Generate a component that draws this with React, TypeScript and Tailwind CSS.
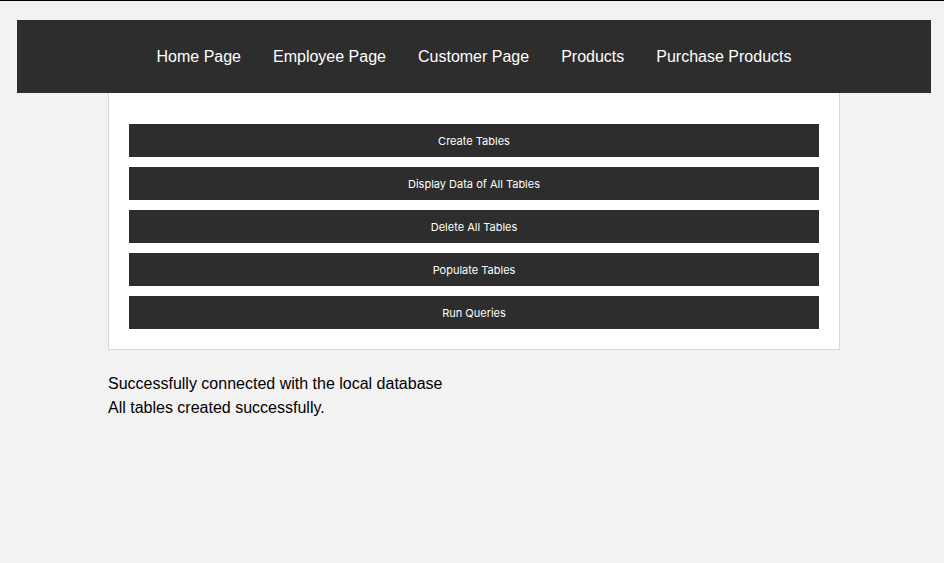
const links = ["Home Page", "Employee Page", "Customer Page", "Products", "Purchase Products"];

const actions = [
  "Create Tables",
  "Display Data of All Tables",
  "Delete All Tables",
  "Populate Tables",
  "Run Queries",
];

export default function App() {
  return (
    <div className="min-h-[563px] border-t border-black bg-[#f2f2f2] pl-[17px] pr-[13px] pt-[19px] font-['Liberation_Sans',Arial,sans-serif] text-black">
      {/* Top navigation */}
      <nav className="flex h-[73px] items-center justify-center bg-[#2d2d2d]">
        {links.map((l) => (
          <a key={l} href="#" className="px-4 text-[16px] text-white">
            {l}
          </a>
        ))}
      </nav>

      <div className="mx-auto w-[732px]">
        <div className="flex flex-col gap-[10px] border border-t-0 border-[#d9d9d9] bg-white px-5 pb-5 pt-[31px]">
          {actions.map((a) => (
            <button
              key={a}
              className="h-[33px] w-full bg-[#2d2d2d] pt-[2px] font-['Inter',sans-serif] text-[11px] font-normal text-white"
            >
              {a}
            </button>
          ))}
        </div>

        <div className="mt-[22px] text-[16px] leading-6">
          <p>Successfully connected with the local database</p>
          <p>All tables created successfully.</p>
        </div>
      </div>
    </div>
  );
}
